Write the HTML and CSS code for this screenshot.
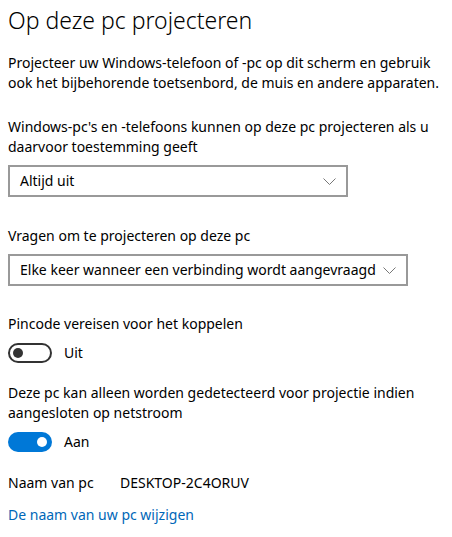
FILE: index.html
```html
<!DOCTYPE html>
<html lang="nl">
<head>
<meta charset="utf-8">
<title>Op deze pc projecteren</title>
<link rel="stylesheet" href="styles.css">
</head>
<body>
<main class="page">
  <h1 class="title">Op deze pc projecteren</h1>
  <p class="intro">Projecteer uw Windows-telefoon of -pc op dit scherm en gebruik ook het bijbehorende toetsenbord, de muis en andere apparaten.</p>

  <section class="setting s-first">
    <p class="label">Windows-pc's en -telefoons kunnen op deze pc projecteren als u daarvoor toestemming geeft</p>
    <div class="select select-short">
      <span class="select-text">Altijd uit</span>
      <svg class="chev" width="13" height="7" viewBox="0 0 13 7"><path d="M0.5 0.5 L6.5 6.5 L12.5 0.5" fill="none" stroke="#777" stroke-width="1"/></svg>
    </div>
  </section>

  <section class="setting s-second">
    <p class="label">Vragen om te projecteren op deze pc</p>
    <div class="select select-long">
      <span class="select-text">Elke keer wanneer een verbinding wordt aangevraagd</span>
      <svg class="chev" width="13" height="7" viewBox="0 0 13 7"><path d="M0.5 0.5 L6.5 6.5 L12.5 0.5" fill="none" stroke="#777" stroke-width="1"/></svg>
    </div>
  </section>

  <section class="setting s-toggle">
    <p class="label">Pincode vereisen voor het koppelen</p>
    <div class="toggle-row">
      <span class="toggle off"><span class="knob"></span></span>
      <span class="toggle-text">Uit</span>
    </div>
  </section>

  <section class="setting s-toggle2">
    <p class="label">Deze pc kan alleen worden gedetecteerd voor projectie indien aangesloten op netstroom</p>
    <div class="toggle-row">
      <span class="toggle on"><span class="knob"></span></span>
      <span class="toggle-text">Aan</span>
    </div>
  </section>

  <div class="name-row">
    <span class="name-label">Naam van pc</span>
    <span class="name-value">DESKTOP-2C4ORUV</span>
  </div>
  <a class="link" href="#">De naam van uw pc wijzigen</a>
</main>
</body>
</html>
```

FILE: styles.css
```css
html, body {
  margin: 0;
  padding: 0;
  background: #ffffff;
}

body {
  font-family: "Noto Sans", "Open Sans", sans-serif;
  font-size: 14px;
  color: #000000;
}

.page {
  padding: 0 8px;
  width: 436px;
}

.title {
  margin: 4px 0 0;
  font-size: 23px;
  font-weight: 300;
  line-height: 32px;
  color: #000;
}

.intro {
  margin: 17px 0 0;
  line-height: 20px;
}

.setting {
  margin: 0;
}

.label {
  margin: 0;
  line-height: 20px;
}

.s-first {
  margin-top: 24px;
}

.s-second {
  margin-top: 29px;
}

.s-toggle {
  margin-top: 28px;
}

.s-toggle2 {
  margin-top: 20px;
}

.select {
  box-sizing: border-box;
  height: 32px;
  border: 2px solid #999999;
  display: flex;
  align-items: center;
  justify-content: space-between;
  padding: 0 10px 0 10px;
  margin-top: 8px;
}

.select-short {
  width: 340px;
}

.select-long {
  width: 400px;
}

.select-text {
  line-height: 20px;
}

.chev {
  display: block;
}

.toggle-row {
  display: flex;
  align-items: center;
  margin-top: 9px;
  height: 20px;
}

.toggle {
  box-sizing: border-box;
  width: 44px;
  height: 20px;
  border-radius: 10px;
  display: flex;
  align-items: center;
  padding: 0 3px;
}

.toggle.off {
  border: 2px solid #333333;
  justify-content: flex-start;
}

.toggle.on {
  background: #0078d7;
  justify-content: flex-end;
  padding: 0 5px;
}

.knob {
  width: 10px;
  height: 10px;
  border-radius: 50%;
}

.toggle.off .knob {
  background: #333333;
}

.toggle.on .knob {
  background: #ffffff;
}

.toggle-text {
  margin-left: 12px;
  line-height: 20px;
}

.name-row {
  display: flex;
  margin-top: 21px;
  line-height: 20px;
}

.name-label {
  width: 112px;
}

.link {
  display: block;
  margin-top: 12px;
  line-height: 20px;
  color: #0067b8;
  text-decoration: none;
}
```
